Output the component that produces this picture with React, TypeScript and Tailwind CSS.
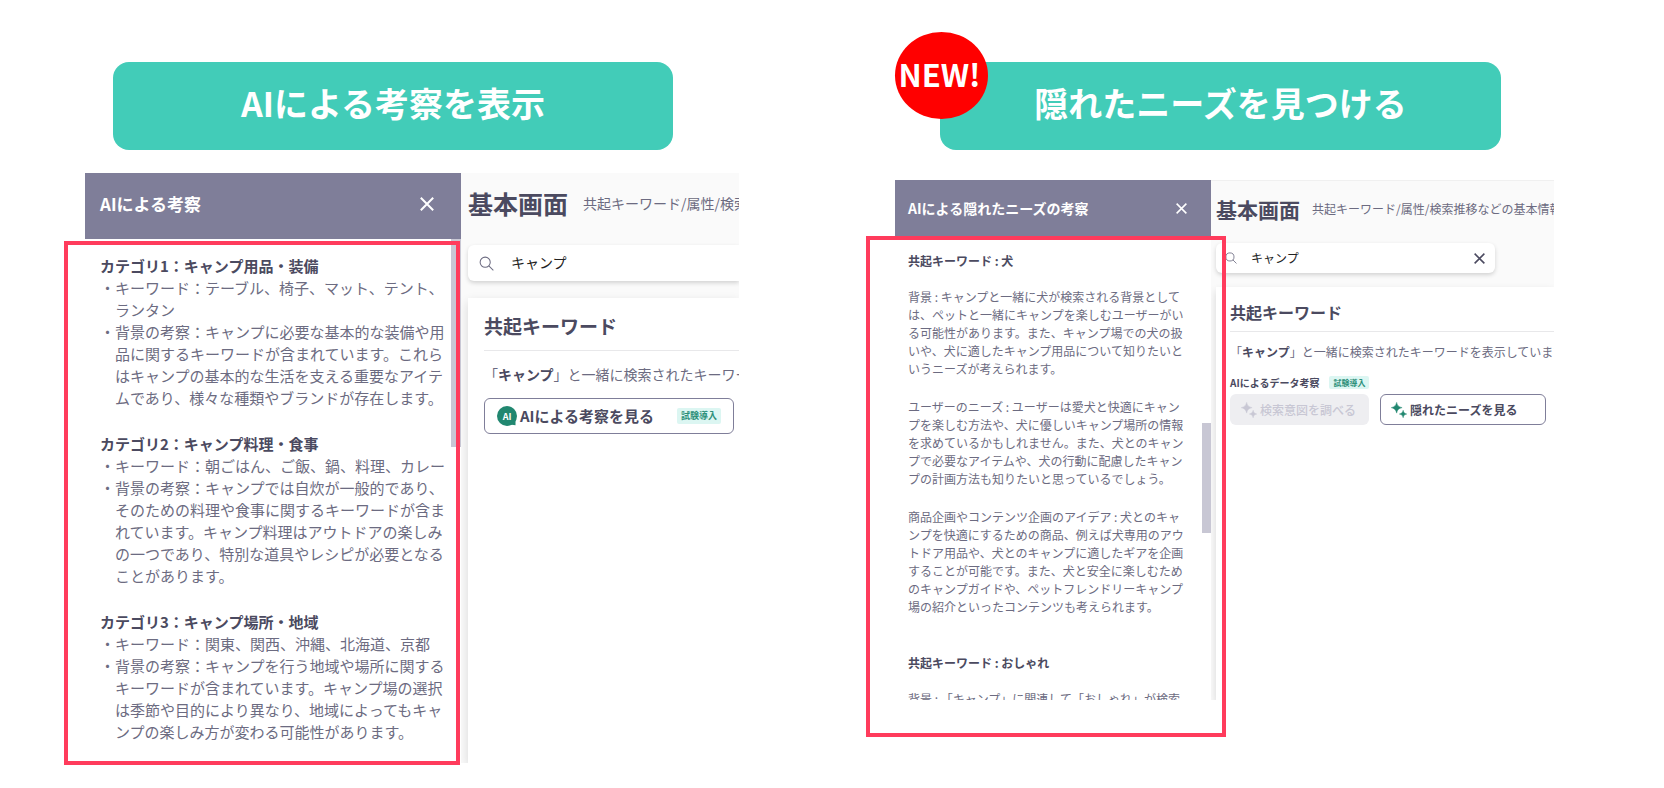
import React from "react";

type Category = { title: string; keywords: string; background: string };

const categories: Category[] = [
  {
    title: "カテゴリ1：キャンプ用品・装備",
    keywords: "キーワード：テーブル、椅子、マット、テント、ランタン",
    background:
      "背景の考察：キャンプに必要な基本的な装備や用品に関するキーワードが含まれています。これらはキャンプの基本的な生活を支える重要なアイテムであり、様々な種類やブランドが存在します。",
  },
  {
    title: "カテゴリ2：キャンプ料理・食事",
    keywords: "キーワード：朝ごはん、ご飯、鍋、料理、カレー",
    background:
      "背景の考察：キャンプでは自炊が一般的であり、そのための料理や食事に関するキーワードが含まれています。キャンプ料理はアウトドアの楽しみの一つであり、特別な道具やレシピが必要となることがあります。",
  },
  {
    title: "カテゴリ3：キャンプ場所・地域",
    keywords: "キーワード：関東、関西、沖縄、北海道、京都",
    background:
      "背景の考察：キャンプを行う地域や場所に関するキーワードが含まれています。キャンプ場の選択は季節や目的により異なり、地域によってもキャンプの楽しみ方が変わる可能性があります。",
  },
];

const needs = [
  "背景 : キャンプと一緒に犬が検索される背景としては、ペットと一緒にキャンプを楽しむユーザーがいる可能性があります。また、キャンプ場での犬の扱いや、犬に適したキャンプ用品について知りたいというニーズが考えられます。",
  "ユーザーのニーズ : ユーザーは愛犬と快適にキャンプを楽しむ方法や、犬に優しいキャンプ場所の情報を求めているかもしれません。また、犬とのキャンプで必要なアイテムや、犬の行動に配慮したキャンプの計画方法も知りたいと思っているでしょう。",
  "商品企画やコンテンツ企画のアイデア : 犬とのキャンプを快適にするための商品、例えば犬専用のアウトドア用品や、犬とのキャンプに適したギアを企画することが可能です。また、犬と安全に楽しむためのキャンプガイドや、ペットフレンドリーキャンプ場の紹介といったコンテンツも考えられます。",
];

function CloseIcon({ className }: { className: string }) {
  return (
    <svg viewBox="0 0 14 14" className={className} fill="none" stroke="currentColor" strokeWidth="2" aria-hidden="true">
      <path d="M0.8 0.8 13.2 13.2M13.2 0.8 0.8 13.2" />
    </svg>
  );
}

function SearchIcon({ className }: { className: string }) {
  return (
    <svg viewBox="0 0 16 16" className={className} fill="none" stroke="currentColor" strokeWidth="1.1" aria-hidden="true">
      <circle cx="6.6" cy="6.6" r="5.4" />
      <path d="M10.5 10.5 15.3 15.3" />
    </svg>
  );
}

function SparkleIcon({ className }: { className: string }) {
  return (
    <svg viewBox="0 0 17 17" className={className} fill="currentColor" stroke="currentColor" strokeWidth="0.5" strokeLinejoin="round" aria-hidden="true">
      <path d="M6 0.4C6.8 3.9 8 5.1 11.8 6C8 6.9 6.8 8 6 11.8C5.1 8 3.9 6.9 0.3 6C3.9 5.1 5.1 3.9 6 0.4Z" />
      <path d="M12.9 8.8C13.4 11.4 14.2 12.2 16.7 12.8C14.2 13.3 13.4 14.1 12.9 16.7C12.3 14.1 11.5 13.3 8.9 12.8C11.5 12.2 12.3 11.4 12.9 8.8Z" />
    </svg>
  );
}

function AiBubble() {
  return (
    <span className="relative flex size-5 shrink-0 items-center justify-center">
      <svg viewBox="0 0 20 20" className="absolute inset-0 size-5 text-[#218770]" fill="currentColor" aria-hidden="true">
        <circle cx="10" cy="10" r="10" />
        <path d="M10 16 18.5 13.5 18.5 19.3 13 18.5Z" />
      </svg>
      <span className="relative text-[9px] leading-none font-bold text-white">AI</span>
    </span>
  );
}

function Banner({ children }: { children: React.ReactNode }) {
  return (
    <h2 className="flex h-[88px] items-center justify-center rounded-2xl bg-[#42ccb8] pb-1.5 text-[34px] leading-none font-bold text-white">
      {children}
    </h2>
  );
}

function LeftDemo() {
  return (
    <section className="min-w-0 pr-[93px] pl-[85px]">
      <div className="mr-[66px] ml-7">
        <Banner>AIによる考察を表示</Banner>
      </div>
      <div className="relative mt-[23px]">
        <div className="flex h-[590px] overflow-hidden">
          <aside className="relative z-10 flex w-[376px] shrink-0 flex-col bg-white">
            <header className="flex h-[66px] shrink-0 items-center justify-between bg-[#7f7e99] pr-[27px] pb-1 pl-[15px] text-white">
              <h3 className="text-[17px] leading-6 font-bold">AIによる考察</h3>
              <button type="button" aria-label="閉じる">
                <CloseIcon className="size-3.5" />
              </button>
            </header>
            <div className="flex min-h-0 flex-1">
              <div className="flex-1 space-y-6 overflow-hidden pt-4 pl-[15px] text-[15px] leading-[22px] text-[#6c6b81]">
                {categories.map((c) => (
                  <article key={c.title}>
                    <h4 className="font-bold text-[#4b4a60]">{c.title}</h4>
                    <ul>
                      <li className="flex">
                        <span>・</span>
                        <span>{c.keywords}</span>
                      </li>
                      <li className="flex">
                        <span>・</span>
                        <span>{c.background}</span>
                      </li>
                    </ul>
                  </article>
                ))}
              </div>
              <div className="w-[10px] shrink-0">
                <div className="h-52 bg-[#c8c7d4]" />
              </div>
            </div>
          </aside>
          <div className="flex min-w-0 flex-1 flex-col bg-[#fafafa] pl-[7px]">
            <div className="flex h-16 items-center gap-[15px] pb-1 whitespace-nowrap">
              <h3 className="text-[25px] leading-8 font-bold text-[#4b4a60]">基本画面</h3>
              <p className="text-[14px] text-[#6c6b81]">共起キーワード/属性/検索推移などの基本情報</p>
            </div>
            <label className="mt-2 flex h-9 shrink-0 items-center gap-[17px] rounded-l-md bg-white pl-[11px] shadow-[0_2px_4px_rgba(0,0,0,0.16)]">
              <SearchIcon className="size-[15px] shrink-0 text-[#6c6b81]" />
              <input aria-label="検索キーワード" defaultValue="キャンプ" className="w-full min-w-0 pb-0.5 text-[14px] text-[#222222] outline-none" />
            </label>
            <div className="mt-[17px] flex-1 bg-white pt-3.5 pl-4 shadow-[0_4px_10px_rgba(0,0,0,0.14)]">
              <h4 className="border-b border-[#e8e8ea] pb-[10px] text-[19px] leading-7 font-bold text-[#4b4a60]">共起キーワード</h4>
              <p className="mt-[11px] text-[14px] leading-6 whitespace-nowrap text-[#6c6b81]">
                「<b className="text-[#4b4a60]">キャンプ</b>」と一緒に検索されたキーワードを表示しています
              </p>
              <button
                type="button"
                className="mt-3 flex h-9 w-[250px] items-center rounded-md border border-[#7f7e99] bg-white pr-3 pl-3 whitespace-nowrap text-[#4b4a60]"
              >
                <AiBubble />
                <span className="ml-[3px] flex-1 text-left text-[15px] leading-5 font-bold">AIによる考察を見る</span>
                <span className="rounded-xs bg-[#dcf6f2] px-1 text-[9px] leading-4 font-bold text-[#2b8f79]">試験導入</span>
              </button>
            </div>
          </div>
        </div>
        <div className="pointer-events-none absolute top-[68px] -bottom-[2px] -left-[21px] z-20 w-[396px] border-4 border-[#ff3b5c]" />
      </div>
    </section>
  );
}

function RightDemo() {
  return (
    <section className="min-w-0 pr-[110px] pl-[63px]">
      <div className="relative mr-[53px] ml-[45px]">
        <Banner>隠れたニーズを見つける</Banner>
        <span className="absolute -top-[30px] -left-[45px] flex h-[87px] w-[93px] items-center justify-center rounded-[50%] bg-[#ff0000] pr-1 pb-1 text-[31px] leading-none font-bold text-white">
          NEW!
        </span>
      </div>
      <div className="relative mt-[30px]">
        <div className="flex h-[520px] overflow-hidden">
          <aside className="relative z-10 flex w-[316px] shrink-0 flex-col bg-white">
            <header className="flex h-14 shrink-0 items-center justify-between bg-[#7f7e99] pr-6 pl-[13px] text-white">
              <h3 className="text-sm font-bold">AIによる隠れたニーズの考察</h3>
              <button type="button" aria-label="閉じる">
                <CloseIcon className="size-[11px]" />
              </button>
            </header>
            <div className="flex min-h-0 flex-1">
              <div className="flex-1 overflow-hidden pt-4 pr-[13px] pl-[13px] text-xs leading-[18px] text-[#6c6b81]">
                <article>
                  <h4 className="mb-[18px] font-bold text-[#4b4a60]">共起キーワード : 犬</h4>
                  <div className="space-y-5">
                    {needs.map((text) => (
                      <p key={text}>{text}</p>
                    ))}
                  </div>
                </article>
                <article className="mt-[38px]">
                  <h4 className="mb-[18px] font-bold text-[#4b4a60]">共起キーワード : おしゃれ</h4>
                  <p className="whitespace-nowrap">背景 : 「キャンプ」に関連して「おしゃれ」が検索</p>
                </article>
              </div>
              <div className="w-[9px] shrink-0 pt-[187px]">
                <div className="h-[110px] bg-[#c8c7d4]" />
              </div>
            </div>
          </aside>
          <div className="flex min-w-0 flex-1 flex-col border-t border-[#f0f0f0] bg-[#fafafa] pl-[5px]">
            <div className="flex h-[57px] items-center gap-3 pb-0.5 whitespace-nowrap">
              <h3 className="text-[21px] leading-7 font-bold text-[#4b4a60]">基本画面</h3>
              <p className="text-xs text-[#6c6b81]">共起キーワード/属性/検索推移などの基本情報</p>
            </div>
            <label className="mt-[5px] flex h-[30px] w-[279px] shrink-0 items-center rounded-md bg-white pr-[10px] pl-[9px] shadow-[0_2px_4px_rgba(0,0,0,0.16)]">
              <SearchIcon className="mr-3.5 size-3 shrink-0 text-[#6c6b81]" />
              <input aria-label="検索キーワード" defaultValue="キャンプ" className="w-full min-w-0 text-xs text-[#222222] outline-none" />
              <button type="button" aria-label="クリア" className="text-[#4b4a60]">
                <CloseIcon className="size-[11px]" />
              </button>
            </label>
            <div className="mt-3.5 flex-1 bg-white pt-3.5 pl-3.5 shadow-[0_4px_8px_rgba(0,0,0,0.14)]">
              <h4 className="border-b border-[#e8e8ea] pb-2 text-base leading-[22px] font-bold text-[#4b4a60]">共起キーワード</h4>
              <p className="mt-[10px] text-xs leading-5 whitespace-nowrap text-[#6c6b81]">
                「<b className="text-[#4b4a60]">キャンプ</b>」と一緒に検索されたキーワードを表示しています
              </p>
              <div className="mt-3.5 flex items-center gap-[10px]">
                <span className="text-[10px] leading-[13px] font-bold text-[#4b4a60]">AIによるデータ考察</span>
                <span className="rounded-xs bg-[#dcf6f2] px-1 text-[8px] leading-[13px] font-bold text-[#2b8f79]">試験導入</span>
              </div>
              <div className="mt-[5px] flex gap-[11px] text-xs font-bold whitespace-nowrap">
                <button
                  type="button"
                  disabled
                  className="flex h-[31px] w-[139px] shrink-0 items-center gap-[3px] rounded-md bg-[#eeeef1] pl-[11px] text-[#c8c7d4]"
                >
                  <SparkleIcon className="size-4 shrink-0" />
                  <span className="font-medium">検索意図を調べる</span>
                </button>
                <button
                  type="button"
                  className="flex h-[31px] w-[166px] shrink-0 items-center gap-[3px] rounded-md border border-[#7f7e99] bg-white pl-[10px] text-[#4b4a60]"
                >
                  <SparkleIcon className="size-4 shrink-0 text-[#218770]" />
                  隠れたニーズを見る
                </button>
              </div>
            </div>
          </div>
        </div>
        <div className="pointer-events-none absolute top-14 -bottom-[37px] -left-[29px] z-20 w-[360px] border-4 border-[#ff3b5c]" />
      </div>
    </section>
  );
}

export default function App() {
  return (
    <main
      lang="ja"
      className="grid min-h-screen grid-cols-2 bg-white pt-[62px] font-['Noto_Sans_CJK_JP',sans-serif]"
    >
      <LeftDemo />
      <RightDemo />
    </main>
  );
}
